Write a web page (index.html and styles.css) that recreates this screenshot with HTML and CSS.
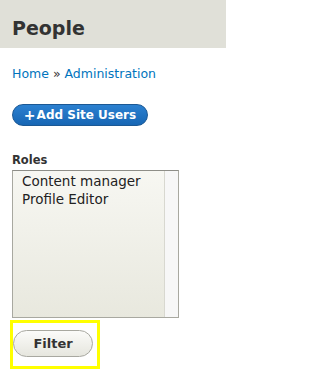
FILE: index.html
```html
<!DOCTYPE html>
<html>
<head>
<meta charset="utf-8">
<link rel="stylesheet" href="styles.css">
</head>
<body>
<header class="page-header">
  <h1 class="page-title">People</h1>
</header>
<main class="content">
  <nav class="breadcrumb"><a href="#">Home</a> » <a href="#">Administration</a></nav>
  <div class="actions">
    <a class="btn-primary" href="#"><span class="plus">+</span>Add Site Users</a>
  </div>
  <div class="field">
    <label class="field-label">Roles</label>
    <div class="select-box">
      <div class="options">
        <div class="option">Content manager</div>
        <div class="option">Profile Editor</div>
      </div>
      <div class="scrollbar"></div>
    </div>
  </div>
  <div class="highlight">
    <button class="btn-filter">Filter</button>
  </div>
</main>
</body>
</html>
```

FILE: styles.css
```css
html, body {
  margin: 0;
  padding: 0;
  background: #fff;
}
body {
  font-family: "DejaVu Sans", "Liberation Sans", sans-serif;
  color: #333;
  width: 226px;
}
.page-header {
  background: #e0e0d8;
  height: 48px;
  padding: 0 12px;
  box-sizing: border-box;
  display: flex;
  align-items: flex-start;
}
.page-title {
  margin: 0;
  padding-top: 17px;
  font-size: 19px;
  line-height: 23px;
  font-weight: bold;
  color: #333;
}
.content {
  padding: 0 12px;
}
.breadcrumb {
  padding-top: 18px;
  font-size: 12.5px;
  line-height: 16px;
  color: #333;
}
.breadcrumb a {
  color: #0074bd;
  text-decoration: none;
}
.actions {
  padding-top: 22px;
  display: flex;
}
.btn-primary {
  display: flex;
  align-items: center;
  justify-content: center;
  width: 136px;
  height: 22px;
  box-sizing: border-box;
  border-radius: 11px;
  border: 1px solid #1b5894;
  background: linear-gradient(#2b80d0, #1766b4);
  color: #fff;
  font-weight: bold;
  font-size: 12px;
  text-decoration: none;
  padding-bottom: 1px;
}
.plus {
  font-size: 14px;
  margin-right: 1px;
}
.field {
  padding-top: 27px;
}
.field-label {
  display: block;
  font-size: 11.5px;
  font-weight: bold;
  line-height: 14px;
  color: #333;
  margin-bottom: 3px;
}
.select-box {
  display: flex;
  width: 167px;
  height: 148px;
  box-sizing: border-box;
  border: 1px solid #a8a8a0;
  border-top-color: #8e8e88;
}
.options {
  flex: 1;
  background: linear-gradient(#f7f7f2, #e8e8de);
  border-right: 1px solid #d8d8d0;
  padding: 1px 0 0 9px;
}
.option {
  font-size: 13.5px;
  line-height: 18px;
  color: #222;
}
.scrollbar {
  width: 13px;
  background: #f7f7f7;
}
.highlight {
  margin-top: 2px;
  margin-left: -2px;
  width: 90px;
  height: 49px;
  box-sizing: border-box;
  border: 3px solid #ffff00;
  padding: 7px 0 0 0;
}
.btn-filter {
  width: 80px;
  height: 27px;
  border-radius: 14px;
  border: 1px solid #a8a8a0;
  background: linear-gradient(#fbfbf9, #e6e6de);
  font-family: "DejaVu Sans", sans-serif;
  font-weight: bold;
  font-size: 13px;
  color: #333;
  padding: 0;
  margin: 0;
}
```
